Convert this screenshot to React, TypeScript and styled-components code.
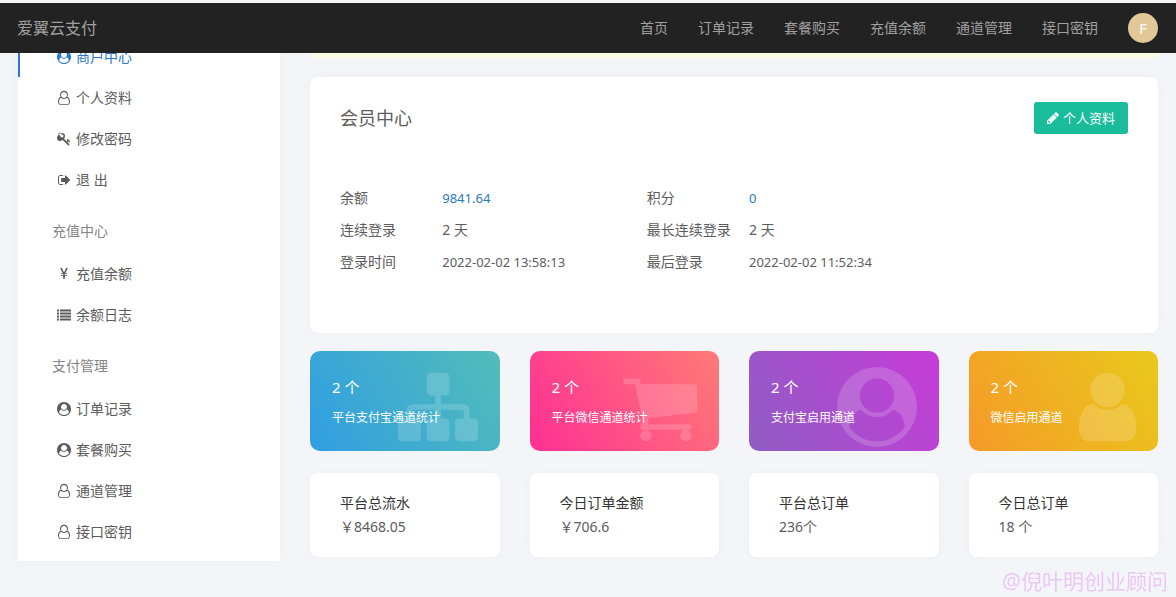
import React from "react";
import styled, { createGlobalStyle } from "styled-components";

const GlobalStyle = createGlobalStyle`
  *, *::before, *::after { box-sizing: border-box; }
  body {
    margin: 0;
    background: #f4f5f8;
    color: #5c5c5c;
    font-family: "Noto Sans", "Noto Sans CJK SC", sans-serif;
    font-size: 14px;
  }
  a { color: inherit; text-decoration: none; }
  ul, dl, dd, h1, h2, h3, p { margin: 0; padding: 0; list-style: none; font-weight: 400; }
`;

/* Icon outlines use a 1792-unit em with the y axis pointing up. */
const glyphs = {
  userCircle: {
    width: 1792,
    path: "M1523 197q-22 155 -87.5 257.5t-184.5 118.5q-67 -74 -159.5 -115.5t-195.5 -41.5t-195.5 41.5t-159.5 115.5q-119 -16 -184.5 -118.5t-87.5 -257.5q106 -150 271 -237.5t356 -87.5t356 87.5t271 237.5zM1280 896q0 159 -112.5 271.5t-271.5 112.5t-271.5 -112.5t-112.5 -271.5t112.5 -271.5t271.5 -112.5t271.5 112.5t112.5 271.5zM1792 640q0 -182 -71 -347.5t-190.5 -286t-285.5 -191.5t-349 -71q-182 0 -348 71t-286 191t-191 286t-71 348t71 348t191 286t286 191t348 71t348 -71t286 -191t191 -286t71 -348z",
  },
  userOutline: {
    width: 1536,
    path: "M1201 784q47 -14 89.5 -38t89 -73t79.5 -115.5t55 -172t22 -236.5q0 -154 -100 -263.5t-241 -109.5h-854q-141 0 -241 109.5t-100 263.5q0 131 22 236.5t55 172t79.5 115.5t89 73t89.5 38q-79 125 -79 272q0 104 40.5 198.5t109.5 163.5t163.5 109.5t198.5 40.5t198.5 -40.5t163.5 -109.5t109.5 -163.5t40.5 -198.5q0 -147 -79 -272zM768 1408q-159 0 -271.5 -112.5t-112.5 -271.5t112.5 -271.5t271.5 -112.5t271.5 112.5t112.5 271.5t-112.5 271.5t-271.5 112.5zM1195 -128q88 0 150.5 71.5t62.5 173.5q0 239 -78.5 377t-225.5 145q-145 -127 -336 -127t-336 127q-147 -7 -225.5 -145t-78.5 -377q0 -102 62.5 -173.5t150.5 -71.5h854z",
  },
  key: {
    width: 1792,
    path: "M832 1024q0 -80 -56 -136t-136 -56t-136 56t-56 136q0 42 19 83q-41 -19 -83 -19q-80 0 -136 56t-56 136t56 136t136 56t136 -56t56 -136q0 -42 -19 -83q41 19 83 19q80 0 136 -56t56 -136zM1683 320q0 -17 -49 -66t-66 -49q-9 0 -28.5 16t-36.5 33t-38.5 40t-24.5 26l-96 -96l220 -220q28 -28 28 -68q0 -42 -39 -81t-81 -39q-40 0 -68 28l-671 671q-176 -131 -365 -131q-163 0 -265.5 102.5t-102.5 265.5q0 160 95 313t248 248t313 95q163 0 265.5 -102.5t102.5 -265.5q0 -189 -131 -365l355 -355l96 96q-3 3 -26 24.5t-40 38.5t-33 36.5t-16 28.5q0 17 49 66t66 49q13 0 23 -10q6 -6 46 -44.5t82 -79.5t86.5 -86t73 -78t28.5 -41z",
  },
  signOut: {
    width: 1664,
    path: "M640 96q0 -4 1 -20t0.5 -26.5t-3 -23.5t-10 -19.5t-20.5 -6.5h-320q-119 0 -203.5 84.5t-84.5 203.5v704q0 119 84.5 203.5t203.5 84.5h320q13 0 22.5 -9.5t9.5 -22.5q0 -4 1 -20t0.5 -26.5t-3 -23.5t-10 -19.5t-20.5 -6.5h-320q-66 0 -113 -47t-47 -113v-704q0 -66 47 -113t113 -47h288h11h13t11.5 -1t11.5 -3t8 -5.5t7 -9t2 -13.5zM1568 640q0 -26 -19 -45l-544 -544q-19 -19 -45 -19t-45 19t-19 45v288h-448q-26 0 -45 19t-19 45v384q0 26 19 45t45 19h448v288q0 26 19 45t45 19t45 -19l544 -544q19 -19 19 -45z",
  },
  yen: {
    width: 1027,
    path: "M407 0h213v400h300v120h-300v110h300v120h-240l330 658h-230l-266 -590l-266 590h-235l335 -658h-240v-120h299v-110h-299v-120h299z",
  },
  list: {
    width: 1792,
    path: "M0 -64h256v256h-256zM0 320h256v256h-256zM0 704h256v256h-256zM0 1088h256v256h-256zM384 -64h1408v256h-1408zM384 320h1408v256h-1408zM384 704h1408v256h-1408zM384 1088h1408v256h-1408z",
  },
  pencil: {
    width: 1536,
    path: "M363 0l91 91l-235 235l-91 -91v-107h128v-128h107zM886 928q0 22 -22 22q-10 0 -17 -7l-542 -542q-7 -7 -7 -17q0 -22 22 -22q10 0 17 7l542 542q7 7 7 17zM832 1120l416 -416l-832 -832h-416v416zM1515 1024q0 -53 -37 -90l-166 -166l-416 416l166 165q36 38 90 38q53 0 91 -38l235 -234q37 -39 37 -91z",
  },
  sitemap: {
    width: 1792,
    path: "M1792 288v-320q0 -40 -28 -68t-68 -28h-320q-40 0 -68 28t-28 68v320q0 40 28 68t68 28h96v192h-512v-192h96q40 0 68 -28t28 -68v-320q0 -40 -28 -68t-68 -28h-320q-40 0 -68 28t-28 68v320q0 40 28 68t68 28h96v192h-512v-192h96q40 0 68 -28t28 -68v-320q0 -40 -28 -68t-68 -28h-320q-40 0 -68 28t-28 68v320q0 40 28 68t68 28h96v192q0 52 38 90t90 38h512v192h-96q-40 0 -68 28t-28 68v320q0 40 28 68t68 28h320q40 0 68 -28t28 -68v-320q0 -40 -28 -68t-68 -28h-96v-192h512q52 0 90 -38t38 -90v-192h96q40 0 68 -28t28 -68z",
  },
  cart: {
    width: 1664,
    path: "M640 0q0 -52 -38 -90t-90 -38t-90 38t-38 90t38 90t90 38t90 -38t38 -90zM1536 0q0 -52 -38 -90t-90 -38t-90 38t-38 90t38 90t90 38t90 -38t38 -90zM1664 1088v-512q0 -24 -16.5 -42.5t-40.5 -21.5l-1044 -122q13 -60 13 -70q0 -16 -24 -64h920q26 0 45 -19t19 -45t-19 -45t-45 -19h-1024q-26 0 -45 19t-19 45q0 11 8 31.5t16 36t21.5 40t15.5 29.5l-177 823h-204q-26 0 -45 19t-19 45t19 45t45 19h256q16 0 28.5 -6.5t19.5 -15.5t13 -24.5t8 -26t5.5 -29.5t4.5 -26h1201q26 0 45 -19t19 -45z",
  },
  user: {
    width: 1280,
    path: "M1280 137q0 -109 -62.5 -187t-150.5 -78h-854q-88 0 -150.5 78t-62.5 187q0 85 8.5 160.5t31.5 152t58.5 131t94 89t134.5 34.5q131 -128 313 -128t313 128q76 0 134.5 -34.5t94 -89t58.5 -131t31.5 -152t8.5 -160.5zM1024 1024q0 -159 -112.5 -271.5t-271.5 -112.5t-271.5 112.5t-112.5 271.5t112.5 271.5t271.5 112.5t271.5 -112.5t112.5 -271.5z",
  },
};

type GlyphName = keyof typeof glyphs;

function Icon({ name, size }: { name: GlyphName; size: number }) {
  const { width, path } = glyphs[name];
  return (
    <svg
      height={size}
      width={(size * width) / 1792}
      viewBox={`0 0 ${width} 1792`}
      fill="currentColor"
      fillRule="evenodd"
      overflow="visible"
      aria-hidden="true"
    >
      <path transform="translate(0 1536) scale(1 -1)" d={path} />
    </svg>
  );
}

const TopBar = styled.header`
  position: relative;
  z-index: 2;
  display: flex;
  align-items: center;
  justify-content: space-between;
  height: 53px;
  padding: 0 18px 0 17px;
  border-top: 3px solid #f5f6f6;
  background: #222;
  color: #a0a0a0;
`;

const Brand = styled.a`
  font-size: 16px;
  line-height: 24px;
`;

const TopNav = styled.nav`
  display: flex;
  align-items: center;
  gap: 30px;
  line-height: 20px;
`;

const Avatar = styled.a`
  display: grid;
  place-items: center;
  width: 30px;
  height: 30px;
  border-radius: 50%;
  background: #e2c798;
  color: #fff;
  font-size: 15px;
`;

const Page = styled.div`
  display: grid;
  grid-template-columns: 262px minmax(0, 1fr);
  column-gap: 30px;
  align-items: start;
  padding: 0 18px 36px;
`;

const Sidebar = styled.aside`
  margin-top: -17px;
  padding-bottom: 9px;
  background: #fff;
  box-shadow: 0 2px 12px rgba(80, 90, 120, 0.04);
`;

const MenuHeading = styled.h2`
  padding: 16px 34px 7px;
  color: #858585;
  font-size: 14px;
  line-height: 30px;
`;

const MenuLink = styled.a<{ $active?: boolean }>`
  display: flex;
  align-items: center;
  gap: 3px;
  height: 41px;
  padding-left: 35px;
  border-left: 2px solid ${(p) => (p.$active ? "#2a78dc" : "transparent")};
  color: ${(p) => (p.$active ? "#2a78cc" : "#5c5c5c")};
  line-height: 20px;
`;

const MenuIcon = styled.span`
  display: flex;
  justify-content: center;
  width: 18px;
`;

const Content = styled.main`
  min-width: 0;
`;

const Notice = styled.div`
  height: 44px;
  margin-top: -39px;
  margin-bottom: 19px;
  border-radius: 4px;
  background: #fbfae2;
`;

const Card = styled.section`
  border-radius: 8px;
  background: #fff;
  box-shadow: 0 0 10px rgba(80, 90, 120, 0.04);
`;

const MemberCard = styled(Card)`
  padding: 25px 0 55px 30px;
`;

const MemberHead = styled.div`
  display: flex;
  align-items: center;
  justify-content: space-between;
  margin: 0 30px 48px 0;
`;

const Title = styled.h1`
  font-size: 18px;
  line-height: 30px;
`;

const ProfileButton = styled.button`
  display: flex;
  align-items: center;
  gap: 4px;
  height: 32px;
  padding: 0 13px;
  border: 0;
  border-radius: 3px;
  background: #1abc9c;
  color: #fff;
  font-family: inherit;
  font-size: 13px;
  line-height: 20px;
`;

const Facts = styled.dl`
  display: grid;
  grid-template-columns: 1fr 2fr 1fr 4fr;
  line-height: 32px;
  white-space: nowrap;
`;

const FactValue = styled.dd<{ $numeric?: boolean; $accent?: boolean }>`
  font-size: ${(p) => (p.$numeric ? "13px" : "14px")};
  color: ${(p) => (p.$accent ? "#2a7ab8" : "inherit")};
`;

const CardRow = styled.div<{ $gap: number }>`
  display: grid;
  grid-template-columns: repeat(4, minmax(0, 1fr));
  column-gap: 30px;
  margin-top: ${(p) => p.$gap}px;
`;

const StatCard = styled.section<{ $from: string; $to: string }>`
  position: relative;
  height: 100px;
  padding: 21px 22px 0;
  border-radius: 10px;
  background: linear-gradient(60deg, ${(p) => p.$from}, ${(p) => p.$to});
  color: #fff;
  white-space: nowrap;
`;

const StatArt = styled.span`
  position: absolute;
  top: 16px;
  right: 22px;
  display: flex;
  color: rgba(255, 255, 255, 0.17);
`;

const StatCount = styled.p`
  position: relative;
  font-size: 15px;
  line-height: 30px;
`;

const StatLabel = styled.h3`
  position: relative;
  font-size: 12px;
  line-height: 32px;
`;

const TotalCard = styled(Card)`
  padding: 18px 30px;
  line-height: 24px;
`;

const TotalLabel = styled.h3`
  color: #333;
  font-size: 14px;
`;

const Watermark = styled.p`
  position: fixed;
  right: 8px;
  bottom: 0;
  color: #ebc8f3;
  font-size: 21px;
  line-height: 32px;
`;

const topLinks = ["首页", "订单记录", "套餐购买", "充值余额", "通道管理", "接口密钥"];

const menu: { heading?: string; items: { icon: GlyphName; label: string; active?: boolean }[] }[] = [
  {
    items: [
      { icon: "userCircle", label: "商户中心", active: true },
      { icon: "userOutline", label: "个人资料" },
      { icon: "key", label: "修改密码" },
      { icon: "signOut", label: "退 出" },
    ],
  },
  {
    heading: "充值中心",
    items: [
      { icon: "yen", label: "充值余额" },
      { icon: "list", label: "余额日志" },
    ],
  },
  {
    heading: "支付管理",
    items: [
      { icon: "userCircle", label: "订单记录" },
      { icon: "userCircle", label: "套餐购买" },
      { icon: "userOutline", label: "通道管理" },
      { icon: "userOutline", label: "接口密钥" },
    ],
  },
];

const facts = [
  { label: "余额", value: "9841.64", numeric: true, accent: true },
  { label: "积分", value: "0", numeric: true, accent: true },
  { label: "连续登录", value: "2 天" },
  { label: "最长连续登录", value: "2 天" },
  { label: "登录时间", value: "2022-02-02 13:58:13", numeric: true },
  { label: "最后登录", value: "2022-02-02 11:52:34", numeric: true },
];

const stats: { icon: GlyphName; label: string; from: string; to: string }[] = [
  { icon: "sitemap", label: "平台支付宝通道统计", from: "#309ee2", to: "#52bdb9" },
  { icon: "cart", label: "平台微信通道统计", from: "#ff2f94", to: "#ff7a76" },
  { icon: "userCircle", label: "支付宝启用通道", from: "#8f5dc4", to: "#c73cd8" },
  { icon: "user", label: "微信启用通道", from: "#f59a28", to: "#e9c91b" },
];

const totals = [
  { label: "平台总流水", value: "￥8468.05" },
  { label: "今日订单金额", value: "￥706.6" },
  { label: "平台总订单", value: "236个" },
  { label: "今日总订单", value: "18 个" },
];

export default function App() {
  return (
    <>
      <GlobalStyle />
      <TopBar>
        <Brand href="#">爱翼云支付</Brand>
        <TopNav>
          {topLinks.map((label) => (
            <a key={label} href="#">{label}</a>
          ))}
          <Avatar href="#">F</Avatar>
        </TopNav>
      </TopBar>
      <Page>
        <Sidebar>
          {menu.map((group, index) => (
            <nav key={index}>
              {group.heading && <MenuHeading>{group.heading}</MenuHeading>}
              <ul>
                {group.items.map((item) => (
                  <li key={item.label}>
                    <MenuLink href="#" $active={item.active}>
                      <MenuIcon><Icon name={item.icon} size={14} /></MenuIcon>
                      {item.label}
                    </MenuLink>
                  </li>
                ))}
              </ul>
            </nav>
          ))}
        </Sidebar>
        <Content>
          <Notice />
          <MemberCard>
            <MemberHead>
              <Title>会员中心</Title>
              <ProfileButton type="button">
                <Icon name="pencil" size={14} />
                个人资料
              </ProfileButton>
            </MemberHead>
            <Facts>
              {facts.map((fact) => (
                <React.Fragment key={fact.label}>
                  <dt>{fact.label}</dt>
                  <FactValue $numeric={fact.numeric} $accent={fact.accent}>{fact.value}</FactValue>
                </React.Fragment>
              ))}
            </Facts>
          </MemberCard>
          <CardRow $gap={18}>
            {stats.map((stat) => (
              <StatCard key={stat.label} $from={stat.from} $to={stat.to}>
                <StatArt><Icon name={stat.icon} size={80} /></StatArt>
                <StatCount>2 个</StatCount>
                <StatLabel>{stat.label}</StatLabel>
              </StatCard>
            ))}
          </CardRow>
          <CardRow $gap={22}>
            {totals.map((total) => (
              <TotalCard key={total.label}>
                <TotalLabel>{total.label}</TotalLabel>
                <p>{total.value}</p>
              </TotalCard>
            ))}
          </CardRow>
        </Content>
      </Page>
      <Watermark>@倪叶明创业顾问</Watermark>
    </>
  );
}
